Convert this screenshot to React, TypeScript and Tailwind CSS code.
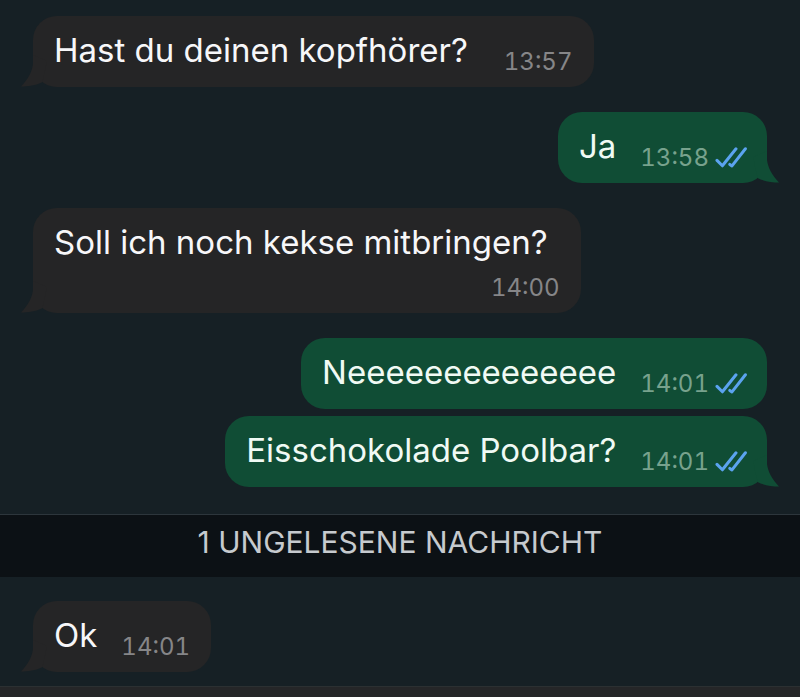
type Message = {
  text: string;
  time: string;
  mine?: boolean;
  tail?: boolean;
  stacked?: boolean;
  gap?: string;
};

const earlier: Message[][] = [
  [{ text: "Hast du deinen kopfhörer?", time: "13:57", tail: true, gap: "gap-9" }],
  [{ text: "Ja", time: "13:58", mine: true, tail: true }],
  [{ text: "Soll ich noch kekse mitbringen?", time: "14:00", tail: true, stacked: true }],
  [
    { text: "Neeeeeeeeeeeeee", time: "14:01", mine: true },
    { text: "Eisschokolade Poolbar?", time: "14:01", mine: true, tail: true },
  ],
];

const unread: Message[][] = [[{ text: "Ok", time: "14:01", tail: true }]];

function ReadTicks() {
  return (
    <svg
      className="h-[22px] w-8 shrink-0"
      viewBox="0 0 32 22"
      fill="none"
      stroke="#5ba3ef"
      strokeWidth="3"
      strokeLinecap="round"
      strokeLinejoin="round"
      role="img"
      aria-label="Gelesen"
    >
      <path d="M2 13.4 7.4 18.8 21 1.8" />
      <path d="M14.8 17.4 17 18.9 30.4 1.8" />
    </svg>
  );
}

function Tail({ mine }: { mine?: boolean }) {
  return (
    <svg
      className={
        mine
          ? "absolute -right-3 bottom-0 h-8 w-9 text-[#104d35]"
          : "absolute -left-3 bottom-0 h-8 w-9 -scale-x-100 text-[#252526]"
      }
      viewBox="0 0 36 32"
      fill="currentColor"
      aria-hidden="true"
    >
      <path d="M10 6 24 0V9C25 17 29 24 36 31.6 29 31.4 21 30.5 14.5 27Z" />
    </svg>
  );
}

function Bubble({ message }: { message: Message }) {
  const { text, time, mine, tail, stacked, gap } = message;
  const direction = stacked ? "flex-col items-end" : `items-end ${gap ?? "gap-6"}`;
  const look = mine
    ? "self-end bg-[#104d35] pr-5 text-[#f0faf4]"
    : "self-start bg-[#252526] pr-[21px] text-[#f7f7f9]";

  return (
    <li
      className={`relative flex max-w-full rounded-[24px] pt-[14px] pb-[9px] pl-[21px] ${direction} ${look}`}
    >
      {tail && <Tail mine={mine} />}
      <p className={`relative text-[33px] leading-10 ${stacked ? "pr-3 pb-[10px]" : "pb-2"}`}>{text}</p>
      <div className="relative flex items-center gap-1.5">
        <time
          className={`text-[24px] leading-8 tabular-nums ${mine ? "text-[#78a28d]" : "text-[#868688]"}`}
        >
          {time}
        </time>
        {mine && <ReadTicks />}
      </div>
    </li>
  );
}

function Thread({ groups }: { groups: Message[][] }) {
  return (
    <div className="flex flex-col gap-[25px] px-[33px]">
      {groups.map((group) => (
        <ul key={group[0].text} className="flex flex-col gap-[7px]">
          {group.map((message) => (
            <Bubble key={message.text} message={message} />
          ))}
        </ul>
      ))}
    </div>
  );
}

export default function App() {
  return (
    <main className="flex min-h-screen flex-col bg-[#162025] font-['Inter','Liberation_Sans',sans-serif] font-normal">
      <section className="pt-4 pb-[27px]">
        <Thread groups={earlier} />
      </section>
      <h2 className="border-t border-[#2d363c] bg-[#0c1115] pt-[9px] pb-[17px] text-center text-[30px] leading-9 font-normal text-[#c6cace]">
        1 UNGELESENE NACHRICHT
      </h2>
      <section className="pt-6 pb-[14px]">
        <Thread groups={unread} />
      </section>
      <footer className="min-h-[11px] flex-1 border-t border-[#2b3032] bg-[#252628]" />
    </main>
  );
}
